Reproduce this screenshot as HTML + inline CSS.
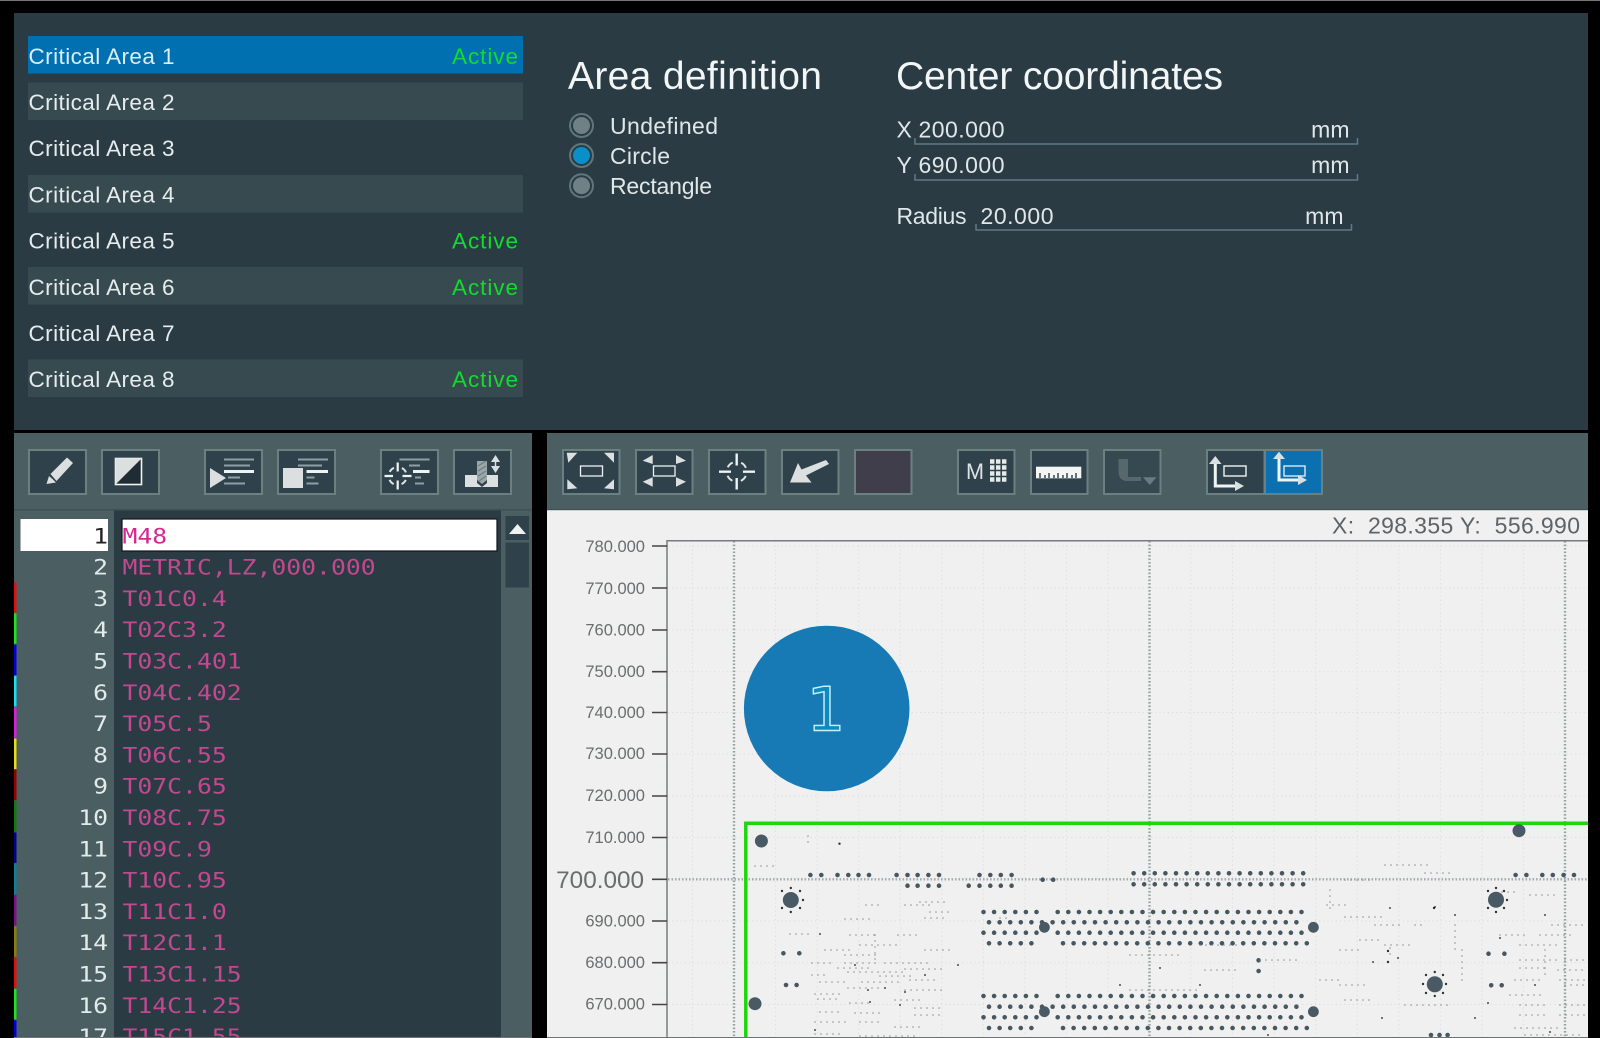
<!DOCTYPE html>
<html><head><meta charset="utf-8"><title>Critical Areas</title>
<style>
html,body{margin:0;padding:0;background:#000;width:1600px;height:1038px;overflow:hidden}
svg{display:block;position:absolute;left:0;top:0}
text{font-family:"Liberation Sans",sans-serif;white-space:pre}
.c{font-size:22.5px;fill:#e6eced}
.a{font-size:22.5px;fill:#0fdc2c}
.h{font-size:39px;fill:#f2f6f6}
.l{font-size:23px;fill:#e0e7e8}
.m{font-family:"DejaVu Sans Mono","Liberation Mono",monospace;font-size:21px;fill:#c2488f}
.n{font-family:"DejaVu Sans Mono","Liberation Mono",monospace;font-size:21px;fill:#e2eaea;text-anchor:end}
.y{font-size:16.5px;fill:#6a6d6e;text-anchor:end}
.b{fill:#2f424c;stroke:#6c8082;stroke-width:2}
.g{stroke:#8fa0a4;stroke-width:2;fill:none}
.w{stroke:#eef3f3;stroke-width:3;fill:none}
.f{fill:#dcdfdf}
</style></head><body>
<svg width="1600" height="1038" viewBox="0 0 1600 1038" xmlns="http://www.w3.org/2000/svg">
<rect width="1600" height="1038" fill="#000"/>
<rect width="1600" height="1" fill="#777"/>
<!-- top panel -->
<rect x="14" y="13" width="1574" height="417" fill="#2b3b44"/>
<rect x="28" y="36" width="495" height="37.5" fill="#0070b0"/>
<rect x="28" y="82.5" width="495" height="37.5" fill="#364a50"/>
<rect x="28" y="175" width="495" height="37.5" fill="#364a50"/>
<rect x="28" y="267" width="495" height="37.5" fill="#364a50"/>
<rect x="28" y="359.5" width="495" height="37.5" fill="#364a50"/>
<text class="c" x="28.5" y="63.8" textLength="146" style="fill:#d8eef8">Critical Area 1</text>
<text class="c" x="28.5" y="110" textLength="146">Critical Area 2</text>
<text class="c" x="28.5" y="156.2" textLength="146">Critical Area 3</text>
<text class="c" x="28.5" y="202.4" textLength="146">Critical Area 4</text>
<text class="c" x="28.5" y="248.6" textLength="146">Critical Area 5</text>
<text class="c" x="28.5" y="294.8" textLength="146">Critical Area 6</text>
<text class="c" x="28.5" y="341" textLength="146">Critical Area 7</text>
<text class="c" x="28.5" y="387.2" textLength="146">Critical Area 8</text>
<text class="a" x="452" y="63.8" textLength="66">Active</text>
<text class="a" x="452" y="248.6" textLength="66">Active</text>
<text class="a" x="452" y="294.8" textLength="66">Active</text>
<text class="a" x="452" y="387.2" textLength="66">Active</text>
<text class="h" x="568" y="89" textLength="254">Area definition</text>
<text class="h" x="896" y="89" textLength="327">Center coordinates</text>
<g fill="#6f8184" stroke="#5e777c" stroke-width="2">
<circle cx="581.5" cy="125.5" r="11.5" fill="#2b3b44"/><circle cx="581.5" cy="155.5" r="11.5" fill="#2b3b44"/><circle cx="581.5" cy="185.7" r="11.5" fill="#2b3b44"/>
</g>
<circle cx="581.5" cy="125.5" r="8.5" fill="#6f8184"/><circle cx="581.5" cy="155.5" r="8.5" fill="#0a8fc8"/><circle cx="581.5" cy="185.7" r="8.5" fill="#6f8184"/>
<text class="l" x="610" y="134" textLength="108">Undefined</text>
<text class="l" x="610" y="164" textLength="60">Circle</text>
<text class="l" x="610" y="194" textLength="102">Rectangle</text>
<text class="l" x="896.5" y="137.5">X</text>
<text class="l" x="896.5" y="173">Y</text>
<text class="l" x="896.5" y="224" textLength="70">Radius</text>
<text class="l" x="918.5" y="137.5" textLength="86">200.000</text>
<text class="l" x="918.5" y="173" textLength="86">690.000</text>
<text class="l" x="980.5" y="224" textLength="73">20.000</text>
<text class="l" x="1349.5" y="137.5" text-anchor="end">mm</text>
<text class="l" x="1349.5" y="173" text-anchor="end">mm</text>
<text class="l" x="1343.5" y="224" text-anchor="end">mm</text>
<path d="M915 138V144H1357.5V138M915 174V180H1357.5V174M976 224V230H1351.5V224" fill="none" stroke="#5f7a80" stroke-width="1.5"/>

<!-- left panel -->
<rect x="14" y="433" width="518" height="605" fill="#2b3b44"/>
<rect x="14" y="433" width="518" height="77" fill="#4b5e62"/>
<rect x="14" y="510" width="100" height="528" fill="#4b5e62"/>
<rect x="501" y="510" width="31" height="528" fill="#4b5e62"/>
<rect x="14" y="509" width="518" height="1.5" fill="#3f5156"/>
<rect class="b" x="29" y="450" width="57" height="44"/>
<rect class="b" x="102" y="450" width="57" height="44"/>
<rect class="b" x="205" y="450" width="57" height="44"/>
<rect class="b" x="278" y="450" width="57" height="44"/>
<rect class="b" x="381" y="450" width="57" height="44"/>
<rect class="b" x="454" y="450" width="57" height="44"/>
<!-- pencil -->
<path class="f" d="M46.5 484L49 476L53 479.5L56 482.5ZM50.5 474L67 457.5L73 463L56.5 481Z"/>
<!-- contrast -->
<rect x="115.5" y="458.5" width="26" height="26" fill="#1f2c33" stroke="#f2f4f4" stroke-width="1.6"/>
<path d="M115.5 458.5H141.5L115.5 484.5Z" fill="#dcdfdf"/>
<!-- run -->
<path class="f" d="M210 468L226 478L210 488Z"/>
<path class="g" d="M224 459.5H254M224 465.5H250M228 477.5H240M224 483.5H245"/><path class="w" d="M224 471.5H254"/>
<!-- stop list -->
<rect class="f" x="283" y="468" width="20" height="20"/>
<path class="g" d="M298 459.5H328M298 465.5H322M306.5 477.5H314.5M306.5 483.5H318.5"/><path class="w" d="M306.5 471.5H328"/>
<!-- target list -->
<path class="g" d="M399.5 459.5H429.5M409 465.5H420M415 477.5H421M415 483.5H424"/><path class="w" d="M413 471.5H429.5" />
<path class="w" style="stroke-width:2.2" d="M384.5 476H393M402.5 476H411.5M397.7 462.5V471.5M397.7 480.5V489.5"/>
<circle cx="397.7" cy="476" r="9" fill="none" stroke="#dfe4e4" stroke-width="2" stroke-dasharray="6 8.14" stroke-dashoffset="10.07"/>
<!-- drill depth -->
<path class="f" d="M465 475H477V483L482 487L487 483V475H498V487H465Z"/>
<path d="M477 461L487 461V480L482 484L477 480Z" fill="#9aa7aa"/>
<path d="M478 466L486 461M478 471L486 466M478 476L486 471M479 481L486 476" stroke="#6d7c80" stroke-width="1.2"/>
<path class="f" d="M491 462L495.5 455L500 462ZM491 466L500 466L495.5 473Z"/><path d="M495.5 460V468" stroke="#dcdfdf" stroke-width="1.5"/>

<!-- editor -->
<rect x="20.5" y="519" width="87.5" height="32" fill="#fff"/>
<rect x="122" y="519" width="375" height="32" fill="#fff" stroke="#10161a" stroke-width="1.2"/>
<rect x="505.5" y="516" width="23.5" height="24" fill="#2f424c"/>
<path d="M509 534L517.5 524L526 534Z" fill="#eef2f2"/>
<rect x="505.5" y="542.5" width="23.5" height="45" fill="#2f424c"/>
<g transform="translate(122.5 0) scale(1.178 1)">
<text class="m" x="0" y="543.3" style="fill:#d6278e">M48</text>
<text class="m" x="0" y="574.6">METRIC,LZ,000.000</text>
<text class="m" x="0" y="605.9">T01C0.4</text>
<text class="m" x="0" y="637.2">T02C3.2</text>
<text class="m" x="0" y="668.5">T03C.401</text>
<text class="m" x="0" y="699.8">T04C.402</text>
<text class="m" x="0" y="731.1">T05C.5</text>
<text class="m" x="0" y="762.4">T06C.55</text>
<text class="m" x="0" y="793.7">T07C.65</text>
<text class="m" x="0" y="825">T08C.75</text>
<text class="m" x="0" y="856.3">T09C.9</text>
<text class="m" x="0" y="887.6">T10C.95</text>
<text class="m" x="0" y="918.9">T11C1.0</text>
<text class="m" x="0" y="950.2">T12C1.1</text>
<text class="m" x="0" y="981.5">T13C1.15</text>
<text class="m" x="0" y="1012.8">T14C1.25</text>
<text class="m" x="0" y="1044.1">T15C1.55</text>
</g>
<g transform="translate(108 0) scale(1.178 1)">
<text class="n" x="0" y="543.3" style="fill:#222">1</text>
<text class="n" x="0" y="574.6">2</text>
<text class="n" x="0" y="605.9">3</text>
<text class="n" x="0" y="637.2">4</text>
<text class="n" x="0" y="668.5">5</text>
<text class="n" x="0" y="699.8">6</text>
<text class="n" x="0" y="731.1">7</text>
<text class="n" x="0" y="762.4">8</text>
<text class="n" x="0" y="793.7">9</text>
<text class="n" x="0" y="825">10</text>
<text class="n" x="0" y="856.3">11</text>
<text class="n" x="0" y="887.6">12</text>
<text class="n" x="0" y="918.9">13</text>
<text class="n" x="0" y="950.2">14</text>
<text class="n" x="0" y="981.5">15</text>
<text class="n" x="0" y="1012.8">16</text>
<text class="n" x="0" y="1044.1">17</text>
</g>
<g>
<rect x="14" y="582" width="2.5" height="30.5" fill="#e01010"/>
<rect x="14" y="613.3" width="2.5" height="30.5" fill="#20e020"/>
<rect x="14" y="644.6" width="2.5" height="30.5" fill="#0000d8"/>
<rect x="14" y="675.9" width="2.5" height="30.5" fill="#20dcf0"/>
<rect x="14" y="707.2" width="2.5" height="30.5" fill="#d820d8"/>
<rect x="14" y="738.5" width="2.5" height="30.5" fill="#e4dc20"/>
<rect x="14" y="769.8" width="2.5" height="30.5" fill="#980000"/>
<rect x="14" y="801.1" width="2.5" height="30.5" fill="#107a10"/>
<rect x="14" y="832.4" width="2.5" height="30.5" fill="#000088"/>
<rect x="14" y="863.7" width="2.5" height="30.5" fill="#108090"/>
<rect x="14" y="895" width="2.5" height="30.5" fill="#7c1088"/>
<rect x="14" y="926.3" width="2.5" height="30.5" fill="#8c7c10"/>
<rect x="14" y="957.6" width="2.5" height="30.5" fill="#e01010"/>
<rect x="14" y="988.9" width="2.5" height="30.5" fill="#20e020"/>
<rect x="14" y="1020.2" width="2.5" height="18" fill="#0000d8"/>
</g>

<!-- right panel -->
<rect x="547" y="433" width="1041" height="77" fill="#4b5e62"/>
<rect x="547" y="510" width="1041" height="528" fill="#f0f0f0"/>
<rect x="547" y="509" width="1041" height="1.2" fill="#3f5156"/>
<rect class="b" x="563" y="450" width="56.5" height="44"/>
<rect class="b" x="636" y="450" width="56.5" height="44"/>
<rect class="b" x="709" y="450" width="56.5" height="44"/>
<rect class="b" x="782" y="450" width="56.5" height="44"/>
<rect class="b" x="855" y="450" width="56.5" height="44" style="fill:#403e4a"/>
<rect class="b" x="958" y="450" width="56.5" height="44"/>
<rect class="b" x="1031" y="450" width="56.5" height="44"/>
<rect class="b" x="1104" y="450" width="56.5" height="44" style="fill:#364951"/>
<rect class="b" x="1207" y="450" width="57.5" height="44"/>
<rect class="b" x="1265" y="450" width="57" height="44" style="fill:#0b6fb0"/>
<!-- zoom fit -->
<path class="f" d="M566.7 452.7H577.3L568.3 462.7ZM614 452.7H604L614 462.7ZM567.3 479.3L577.3 488.3L567.3 489.3ZM614 479.3L604 488.3L614 489.3Z"/>
<rect x="580.5" y="466" width="22" height="10" fill="none" stroke="#eef2f2" stroke-width="1.3"/>
<path class="f" d="M642.7 460.7L652.7 455V464ZM686 460.7L676 455V464ZM642.7 481.7L652.7 477.3V486.7ZM686 481.7L676 477.3V486.7Z"/>
<rect x="653.5" y="466" width="21.5" height="10" fill="none" stroke="#eef2f2" stroke-width="1.3"/>
<!-- crosshair -->
<path class="w" d="M719 471.7H731M743 471.7H755M736.7 453.5V465.5M736.7 478V489.5" style="stroke-width:2.4"/>
<circle cx="736.7" cy="471.7" r="10" fill="none" stroke="#dfe4e4" stroke-width="2" stroke-dasharray="7 8.7" stroke-dashoffset="11.35"/>
<!-- arrow -->
<path class="f" d="M790 482.5H811.5L806 475.5L829 464L826 460L801.5 469.5L798 463Z"/>
<!-- M grid -->
<text x="966" y="479" font-size="22" fill="#dfe3e3" textLength="18" lengthAdjust="spacingAndGlyphs">M</text>
<path d="M990 461.5H1006.7M990 467.5H1006.7M990 473.5H1006.7M990 479.5H1006.7" stroke="#e6eaea" stroke-width="4.4" stroke-dasharray="4.4 1.6" fill="none"/>
<!-- ruler -->
<rect x="1036" y="466.7" width="45.3" height="11.6" fill="#f4f6f6"/>
<path d="M1040 478V473M1045 478V475M1049 478V473M1054 478V475M1058 478V473M1063 478V475M1067 478V473M1072 478V475M1076 478V473" stroke="#2b3b44" stroke-width="1.4"/>
<!-- disabled drill -->
<path d="M1118.5 459H1128V477H1141V481H1125Q1118.5 479 1118.5 472Z" fill="#56686c"/>
<path d="M1143 477.3H1156.5L1149.8 485Z" fill="#6a7c80"/>
<!-- axes -->
<path class="w" d="M1215.3 462V486H1236"/>
<path class="f" d="M1209 464L1215.3 456L1221.5 464ZM1235 481V491L1244 486Z"/>
<rect x="1224" y="466" width="22" height="10" fill="none" stroke="#eef2f2" stroke-width="1.4"/>
<path class="w" d="M1279 458V480H1300"/>
<path class="f" d="M1273 459L1279 451.7L1285 459ZM1298 475V485L1307 480Z"/>
<rect x="1284" y="466" width="21" height="10" fill="none" stroke="#d8ecf6" stroke-width="1.4"/>

<!-- plot -->
<text x="1332" y="533.5" font-size="23" fill="#5d6366" textLength="248" lengthAdjust="spacing">X:  298.355 Y:  556.990</text>
<path d="M692.5 541V1038M775.6 541V1038M817.1 541V1038M858.7 541V1038M900.2 541V1038M941.8 541V1038M983.3 541V1038M1024.9 541V1038M1066.4 541V1038M1108 541V1038M1191 541V1038M1232.6 541V1038M1274.1 541V1038M1315.7 541V1038M1357.2 541V1038M1398.8 541V1038M1440.3 541V1038M1481.9 541V1038M1523.4 541V1038M668 546H1588M668 588H1588M668 630H1588M668 671.7H1588M668 712.5H1588M668 754H1588M668 796H1588M668 837.5H1588M668 921H1588M668 962.7H1588M668 1004.5H1588" stroke="#dcdcdc" stroke-width="1" stroke-dasharray="1.2 3" fill="none"/>
<path d="M734 541V1038M1149.5 541V1038M1565 541V1038" stroke="#98a2a5" stroke-width="2.4" stroke-dasharray="1.6 1.9" fill="none"/>
<path d="M668 879.3H1588" stroke="#a4acae" stroke-width="2.4" stroke-dasharray="1.6 1.9" fill="none"/>
<path d="M1588 540.7H667V1038" fill="none" stroke="#767c7e" stroke-width="1.5"/>
<path d="M652 546H667M652 588H667M652 630H667M652 671.7H667M652 712.5H667M652 754H667M652 796H667M652 837.5H667M652 879.3H667M652 921H667M652 962.7H667M652 1004.5H667" stroke="#444" stroke-width="1.6" fill="none"/>
<text class="y" x="645" y="551.8">780.000</text>
<text class="y" x="645" y="593.8">770.000</text>
<text class="y" x="645" y="635.3">760.000</text>
<text class="y" x="645" y="677">750.000</text>
<text class="y" x="645" y="717.8">740.000</text>
<text class="y" x="645" y="759">730.000</text>
<text class="y" x="645" y="801">720.000</text>
<text class="y" x="645" y="842.8">710.000</text>
<text class="y" x="644" y="888" style="font-size:24.3px">700.000</text>
<text class="y" x="645" y="926.5">690.000</text>
<text class="y" x="645" y="968">680.000</text>
<text class="y" x="645" y="1009.5">670.000</text>
<circle cx="826.7" cy="708.5" r="82.8" fill="#177ab5"/>
<text x="826" y="730.7" font-size="61" text-anchor="middle" style="font-family:'DejaVu Sans',sans-serif" fill="#0d8ac2" stroke="#c6f1fa" stroke-width="1.4">1</text>
<path d="M745.8 1038V823.3H1588" fill="none" stroke="#1ed60c" stroke-width="3.5"/>
<!-- pads -->
<g fill="none" stroke="#475760" stroke-width="4.6" stroke-linecap="round" stroke-dasharray="0 10.6">
<path d="M1133.6 873.3H1304M1133.6 884.3H1304"/>
<path d="M983.5 912H1040M1057.7 912H1302M989 922.3H1307M983.5 932.7H1040M1057.7 932.7H1302M989 943.3H1040M1063 943.3H1307"/>
<path d="M983.5 996H1040M1057.7 996H1302M989 1006.7H1307M983.5 1017.3H1040M1057.7 1017.3H1302M989 1028H1040M1063 1028H1307"/>
</g>
<g fill="none" stroke="#475760" stroke-width="4.6" stroke-linecap="round">
<path d="M810.4 875h0M821.3 875h0M837.5 875h0M848.3 875h0M858.5 875h0M869 875h0M896.6 875h0M907.5 875h0M917.6 875h0M928.4 875h0M939 875h0M907.5 885.7h0M917.6 885.7h0M928.4 885.7h0M939 885.7h0M968.7 885.7h0M979.5 885.7h0M990.3 885.7h0M1000.8 885.7h0M1011.6 885.7h0M979.5 875h0M990.3 875h0M1000.8 875h0M1011.6 875h0M1042.7 879.7h0M1053.2 879.7h0"/>
<path d="M1515.6 875h0M1526.4 875h0M1542.3 875h0M1552.8 875h0M1563.6 875h0M1574 875h0M1258.6 960.3h0M1258.6 971h0M783.4 953.3h0M799.3 953.3h0M786 985h0M796.6 985h0M1488.5 953.7h0M1504.4 953.7h0M1491.2 985.3h0M1501.7 985.3h0M1431 1035h0M1439.5 1035h0M1447.6 1035h0"/>
</g>
<g fill="#4a5a64">
<circle cx="761.4" cy="841" r="6.5"/><circle cx="755" cy="1003.7" r="6.5"/><circle cx="1519" cy="830.7" r="6.5"/>
<circle cx="790.8" cy="900" r="8"/><circle cx="1496" cy="899.7" r="8"/><circle cx="1434.8" cy="984.3" r="8"/>
<circle cx="1044.4" cy="927.3" r="5.4"/><circle cx="1313.4" cy="927.3" r="5.4"/><circle cx="1044.4" cy="1011.7" r="5.4"/><circle cx="1313.4" cy="1011.7" r="5.4"/>
</g>
<path d="M790.8 888h0M800 891h0M803 900h0M800 908h0M790.8 912h0M782 908h0M782 891h0M1496 888h0M1504 891h0M1507 900h0M1504 908h0M1496 912h0M1488 908h0M1488 891h0M1434.8 972h0M1443 975h0M1446 984h0M1443 993h0M1434.8 996h0M1426 993h0M1423 984h0M1426 975h0M839.5 843.7h0M1434 908h0M1388 951h0M1388 962h0" fill="none" stroke="#2a3238" stroke-width="2.4" stroke-linecap="round"/>
<!-- scatter -->
<g fill="none" stroke="#858e92" stroke-width="1.5" stroke-linecap="round" stroke-dasharray="0 6">
<path d="M808 836V846M755 866H775M812 963H835M845 963H880M885 963H930M838 968H870M812 975H830M848 972H905M905 969H945M880 976H915M820 982H850M862 982H900M910 980H935M848 988H880M815 994H840M905 990H945M818 999H840M850 1003H870M895 1000H920M915 1008H945M820 1012H840M855 1013H885M915 1015H940M815 1022H850M860 1022H880M895 1027H925M815 1034H840M860 1036H920"/>
<path d="M790 934H812M845 919H870M866 905H880M905 905H930M850 935H880M898 935H922M925 918H945M825 950H850M860 945H900M925 950H950M920 902H945M1000 918H1010M930 912H950M875 935V960M845 955H880"/>
<path d="M1330 890V910M1345 880H1375M1327 905H1350M1385 865H1430M1425 873H1450M1345 917H1385M1375 925H1400M1360 940H1380M1385 945H1410M1415 925H1425M1340 950H1360M1455 925V950M1390 948V960M1462 950V985M1345 1000H1370M1320 980H1340M1405 1005H1450M1130 955H1180M1200 945H1240M1260 960H1300M1205 970H1240M1130 990H1200M1340 985H1370"/>
<path d="M1502 892H1520M1530 895H1560M1500 935H1530M1540 935H1575M1520 945H1560M1520 960H1560M1552 925H1585M1545 950V980M1565 960H1587M1520 968H1545M1558 970H1587M1515 980H1545M1560 980H1587M1510 995H1545M1565 985H1587M1520 1005H1545M1560 1005H1587M1520 1015H1550M1560 1015H1587M1515 1028H1560M1525 1035H1580"/>
</g>
<path d="M1390 908h0M1435 907h0M1398 958h0M1373 962h0M1455 915h0M1475 1018h0M1382 1018h0M1120 985h0M1200 985h0M1160 968h0M1268 1035h0M1488 1003h0M1535 985h0M1545 915h0M1550 1032h0M1500 938h0M855 965h0M868 990h0M885 988h0M905 992h0M925 975h0M958 965h0M820 934h0M815 1030h0M870 1002h0M900 1005h0" fill="none" stroke="#14191c" stroke-width="1.8" stroke-linecap="round"/>

<rect x="0" y="1037" width="1600" height="1" fill="#6e7476"/>
<rect x="0" y="433" width="14" height="605" fill="#000"/>
<rect x="532" y="433" width="15" height="605" fill="#000"/>
<rect x="1588" y="433" width="12" height="605" fill="#000"/>
</svg>
</body></html>
